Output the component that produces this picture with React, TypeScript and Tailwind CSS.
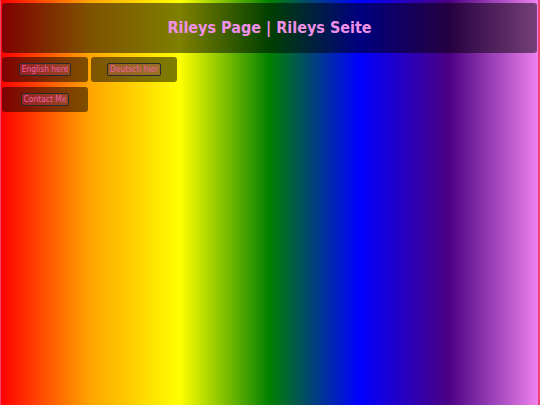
import React from 'react';

const links = [
  { label: 'English here' },
  { label: 'Deutsch hier' },
  { label: 'Contact Me' },
];

export default function App() {
  return (
    <div
      className="h-[405px] w-[540px] overflow-hidden border-l border-r-2 border-[#f04070] bg-[linear-gradient(to_right,#ff0000,#ffa500,#ffff00,#008000,#0000ff,#4b0082,#ee82ee)] pt-[3px]"
      style={{ fontFamily: '"DejaVu Sans Condensed", "DejaVu Sans", sans-serif' }}
    >
      <header className="ml-[1px] flex h-[50px] w-[535px] items-center justify-center rounded-[3px] bg-black/50">
        <h1 className="text-[16px] font-bold text-[#f090e8]">Rileys Page | Rileys Seite</h1>
      </header>

      <nav className="mt-[4px] ml-[1px] grid w-[175px] grid-cols-2 gap-x-[3px] gap-y-[5px]">
        {links.map((link) => (
          <div
            key={link.label}
            className="flex h-[25px] w-[86px] items-center justify-center rounded-[3px] bg-black/50"
          >
            <a
              href="#"
              className="rounded-[2px] border border-[#2a2a2a] bg-[#ff69b4]/20 px-[2px] text-[8.4px] leading-[11px] text-[#f060aa]"
            >
              {link.label}
            </a>
          </div>
        ))}
      </nav>
    </div>
  );
}
